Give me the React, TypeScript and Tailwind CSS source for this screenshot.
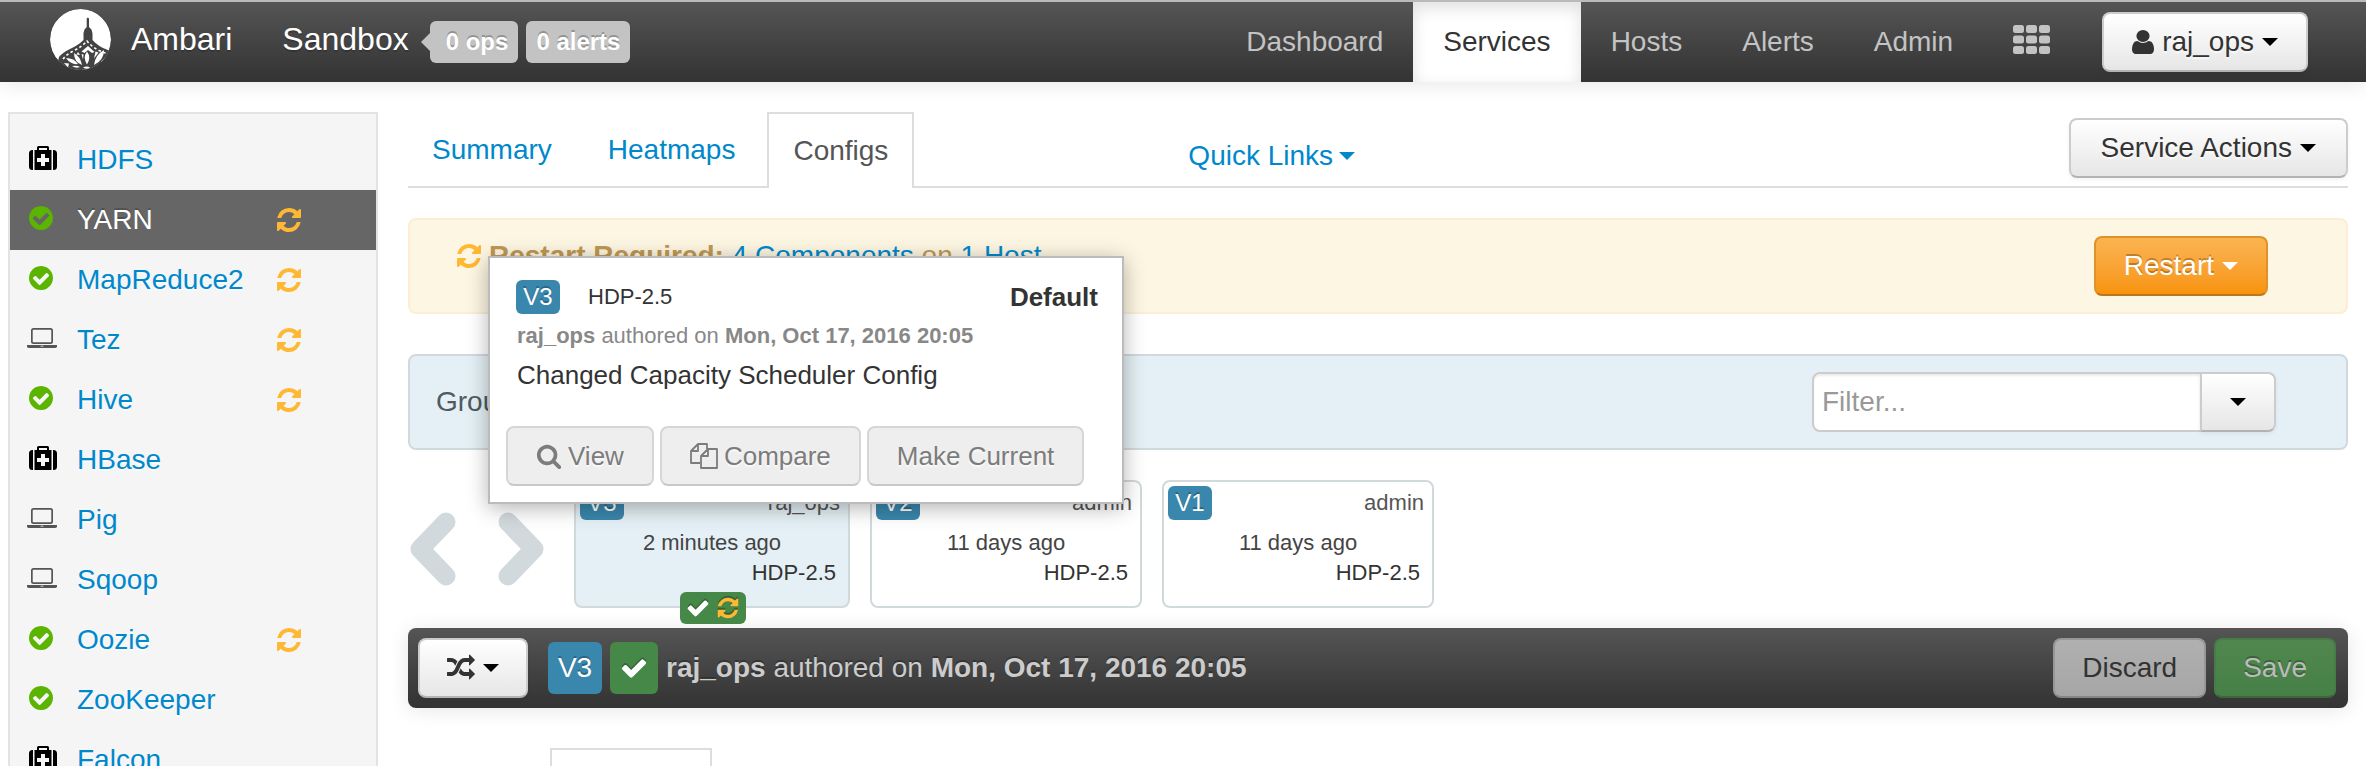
import type { ReactNode } from "react";

const PATHS = {
  refresh:
    "M1639 1056q0 5-1 7-64 268-268 434.5t-478 166.5q-146 0-282.5-55t-243.5-157l-129 129q-19 19-45 19t-45-19-19-45v-448q0-26 19-45t45-19h448q26 0 45 19t19 45-19 45l-137 137q71 66 161 102t187 36q134 0 250-65t186-179q11-17 53-117 8-23 30-23h192q13 0 22.5 9.5t9.5 22.5zm25-800v448q0 26-19 45t-45 19h-448q-26 0-45-19t-19-45 19-45l138-138q-148-137-349-137-134 0-250 65t-186 179q-11 17-53 117-8 23-30 23h-199q-13 0-22.5-9.5t-9.5-22.5v-7q65-268 270-434.5t480-166.5q146 0 284 55.5t245 156.5l130-129q19-19 45-19t45 19 19 45z",
  ok: "M1412 734q0-28-18-46l-91-90q-19-19-45-19t-45 19l-408 407-226-226q-19-19-45-19t-45 19l-91 90q-18 18-18 46 0 27 18 45l362 362q19 19 45 19 27 0 46-19l543-543q18-18 18-45zm252 162q0 209-103 385.5t-279.5 279.5-385.5 103-385.5-103-279.5-279.5-103-385.5 103-385.5 279.5-279.5 385.5-103 385.5 103 279.5 279.5 103 385.5z",
  check:
    "M1671 566q0 40-28 68l-724 724-136 136q-28 28-68 28t-68-28l-136-136-362-362q-28-28-28-68t28-68l136-136q28-28 68-28t68 28l294 295 656-657q28-28 68-28t68 28l136 136q28 28 28 68z",
  search:
    "M1216 832q0-185-131.5-316.5t-316.5-131.5-316.5 131.5-131.5 316.5 131.5 316.5 316.5 131.5 316.5-131.5 131.5-316.5zm512 832q0 52-38 90t-90 38q-54 0-90-38l-343-342q-179 124-399 124-143 0-273.5-55.5t-225-150-150-225-55.5-273.5 55.5-273.5 150-225 225-150 273.5-55.5 273.5 55.5 225 150 150 225 55.5 273.5q0 220-124 399l343 343q37 37 37 90z",
  random:
    "M666 481q-60 92-137 273-22-45-37-72.5t-40.5-63.5-51-56.5-63-35-81.5-14.5h-224q-14 0-23-9t-9-23v-192q0-14 9-23t23-9h224q250 0 410 225zm1126 799q0 14-9 23l-320 320q-9 9-23 9-13 0-22.5-9.5t-9.5-22.5v-192q-32 0-85 .5t-81 1-73-1-71-5-64-10.5-63-18.5-58-28.5-59-40-55-53.5-56-69.5q59-93 136-273 22 45 37 72.5t40.5 63.5 51 56.5 63 35 81.5 14.5h256v-192q0-14 9-23t23-9q12 0 24 10l319 319q9 9 9 23zm0-896q0 14-9 23l-320 320q-9 9-23 9-13 0-22.5-9.5t-9.5-22.5v-192h-256q-48 0-87 15t-69 45-51 61.5-45 77.5q-32 62-78 171-29 66-49.5 111t-54 105-64 100-74 83-90 68.5-106.5 42-128 16.5h-224q-14 0-23-9t-9-23v-192q0-14 9-23t23-9h224q48 0 87-15t69-45 51-61.5 45-77.5q32-62 78-171 29-66 49.5-111t54-105 64-100 74-83 90-68.5 106.5-42 128-16.5h256v-192q0-14 9-23t23-9q12 0 24 10l319 319q9 9 9 23z",
  user: "M1536 1399q0 109-62.5 187t-150.5 78h-854q-88 0-150.5-78t-62.5-187q0-85 8.5-160.5t31.5-152 58.5-131 94-89 134.5-34.5q131 128 313 128t313-128q76 0 134.5 34.5t94 89 58.5 131 31.5 152 8.5 160.5zm-256-887q0 159-112.5 271.5t-271.5 112.5-271.5-112.5-112.5-271.5 112.5-271.5 271.5-112.5 271.5 112.5 112.5 271.5z",
};

function Icon({ name, className = "" }: { name: keyof typeof PATHS; className?: string }) {
  return (
    <svg viewBox="0 0 1792 1792" fill="currentColor" aria-hidden="true" className={`shrink-0 ${className}`}>
      <path d={PATHS[name]} />
    </svg>
  );
}

function Caret({ className = "" }: { className?: string }) {
  return (
    <svg viewBox="0 0 16 8" fill="currentColor" aria-hidden="true" className={`h-2 w-4 shrink-0 ${className}`}>
      <path d="M0 0h16L8 8z" />
    </svg>
  );
}

function Medkit() {
  return (
    <svg viewBox="0 0 28 24" aria-hidden="true" className="h-6 w-7 text-black" fill="currentColor">
      <path d="M4 4v20H3.500A3.500 3.500 0 0 1 0 20.500v-13A3.500 3.500 0 0 1 3.500 4z" />
      <path d="M24 4v20h.5a3.500 3.500 0 0 0 3.500-3.500v-13A3.500 3.500 0 0 0 24.500 4z" />
      <path
        fillRule="evenodd"
        d="M5.500 4H8V1.500A1.500 1.500 0 0 1 9.500 0h9A1.500 1.500 0 0 1 20 1.500V4h2.500v20h-17zM10 2v2h8V2zM12 8v4H8v4h4v4h4v-4h4v-4h-4V8z"
      />
    </svg>
  );
}

function Laptop() {
  return (
    <svg viewBox="0 0 30 20" aria-hidden="true" className="-ml-0.5 h-5 w-[30px] text-[#555]" fill="currentColor">
      <path
        fillRule="evenodd"
        d="M6.500 0h17A2.500 2.500 0 0 1 26 2.500v11a2.500 2.500 0 0 1-2.500 2.500h-17A2.500 2.500 0 0 1 4 13.500v-11A2.500 2.500 0 0 1 6.500 0zM6.500 1.700a.8.8 0 0 0-.8.8v11a.8.8 0 0 0 .8.8h17a.8.8 0 0 0 .8-.8v-11a.8.8 0 0 0-.8-.8z"
      />
      <path fillRule="evenodd" d="M0 17h30v1.500q0 1.500-2.500 1.500h-25Q0 20 0 18.500zM13.500 17.800v.7h3v-.7z" />
    </svg>
  );
}

function Files() {
  return (
    <svg
      viewBox="0 0 28 28"
      aria-hidden="true"
      className="h-7 w-7 shrink-0"
      fill="none"
      stroke="currentColor"
      strokeWidth="1.800"
      strokeLinejoin="round"
    >
      <path d="M10 21H1V9l7-7h9v5M8 2v7H1" />
      <path d="M11 26V14l7-7h9v19zM18 7v7h-7" />
    </svg>
  );
}

function AppsGrid() {
  const steps = [0, 1, 2];
  return (
    <svg viewBox="0 0 37 29" aria-hidden="true" className="h-[29px] w-[37px]" fill="#c3c3c3">
      {steps.map((r) =>
        steps.map((c) => <rect key={`${r}${c}`} x={c * 13} y={r * 10.5} width="11" height="8" rx="2.500" />)
      )}
    </svg>
  );
}

function Logo() {
  return (
    <svg viewBox="0 0 61 61" aria-hidden="true" className="h-[61px] w-[61px]">
      <defs>
        <clipPath id="disc">
          <circle cx="30.500" cy="30.500" r="30.500" />
        </clipPath>
      </defs>
      <g clipPath="url(#disc)">
        <circle cx="30.500" cy="30.500" r="30.500" fill="#fff" />
        <path
          fill="#434343"
          d="M37.800 8.500l1.200 1v8.500l2.500 2.500 1 4V31q6 7 15.500 10l8 2v22H5L9 48q3-4 10-7.500 9-4 14.500-9.500v-7l1-3.500 2.200-2.500V9.500z"
        />
        <path
          fill="none"
          stroke="#fff"
          strokeWidth="1.600"
          strokeDasharray="2.600 2.400"
          d="M13 50q4-5 11-8.500 8-4 13-9.500 5 6 12 9.500l10 4"
        />
        <g fill="#fff">
          <path d="M38 37l6.500 6-2.500 1-4-3-3.500 3-3-1.500z" />
          <path d="M28 43l2 3-3.500-.5z" />
          <path d="M24 44q6 3 8 12-8-3-8-12z" />
          <path d="M38 42.500q4.500 6 0 13-4.500-7 0-13z" transform="translate(-1 0)" />
          <path d="M54 41q0 10-10 15 1-10 10-15z" />
          <path d="M45.500 42.500l3 1-4.500 6z" />
          <path d="M16 49q8 0 12 6-7 1-12-6z" />
          <path d="M14 54l5 .5-1 4zM22 57q5-1 8 1-4 2-8-1zM33 58.500q4-2 7 0-3 2.500-7 0z" />
          <path d="M31.500 45l2 .5-.5 5zM56 48l-3 6-2-1.500z" />
        </g>
      </g>
    </svg>
  );
}

const BTN = "flex h-[60px] shrink-0 items-center rounded-lg border-2";
const BTN_LIGHT =
  "border-[#ccc] border-b-[#b3b3b3] bg-linear-to-b from-white to-[#e6e6e6] text-[#333] [text-shadow:0_2px_2px_rgba(255,255,255,0.75)] shadow-[0_2px_4px_rgba(0,0,0,0.05)]";
const BTN_OFF =
  "gap-1.5 border-[#d6d6d6] border-b-[#c8c8c8] bg-[#eee] px-7 text-[26px] text-[#7c7c7c] [text-shadow:0_2px_2px_rgba(255,255,255,0.75)]";
const LABEL =
  "rounded-md bg-[#3a87ad] text-center text-white [text-shadow:0_-2px_0_rgba(0,0,0,0.25)]";

function NavLink({ children, active = false }: { children: ReactNode; active?: boolean }) {
  return (
    <a
      href="#"
      aria-current={active ? "page" : undefined}
      className={`flex items-center px-[30px] ${
        active ? "bg-white text-[#333] shadow-[inset_0_6px_16px_rgba(0,0,0,0.125)]" : "text-[#c3c3c3]"
      }`}
    >
      {children}
    </a>
  );
}

function Header() {
  return (
    <header className="flex h-[82px] border-t-2 border-[#b7bbbb] bg-linear-to-b from-[#555] to-[#333] pr-[58px] pl-[50px] shadow-[0_2px_20px_rgba(0,0,0,0.1)]">
      <div className="flex items-center pb-1.5 text-[32px] text-white [text-shadow:0_2px_0_rgba(0,0,0,0.2)]">
        <Logo />
        <a href="#" className="ml-5">
          Ambari
        </a>
        <a href="#" className="ml-[50px]">
          Sandbox
        </a>
      </div>
      <div className="ml-3 flex items-center gap-2 text-2xl leading-[42px] font-bold text-white [text-shadow:0_-2px_0_rgba(0,0,0,0.25)]">
        <a href="#" className="flex items-center">
          <svg viewBox="0 0 9 18" aria-hidden="true" className="h-[18px] w-[9px]" fill="#c3c3c3">
            <path d="M9 0v18L0 9z" />
          </svg>
          <span className="rounded-md bg-[#c3c3c3] pr-2.5 pl-4">0 ops</span>
        </a>
        <a href="#" className="rounded-md bg-[#c3c3c3] px-2.5">
          0 alerts
        </a>
      </div>
      <nav className="ml-auto flex">
        <NavLink>Dashboard</NavLink>
        <NavLink active>Services</NavLink>
        <NavLink>Hosts</NavLink>
        <NavLink>Alerts</NavLink>
        <NavLink>Admin</NavLink>
        <a href="#" aria-label="Views" className="flex items-center px-[30px] pb-1.5">
          <AppsGrid />
        </a>
      </nav>
      <button type="button" className={`${BTN} ${BTN_LIGHT} ml-[22px] self-center px-7`}>
        <svg viewBox="256 128 1280 1536" fill="currentColor" aria-hidden="true" className="mr-2 h-6 w-[22px]" preserveAspectRatio="none">
          <path d={PATHS.user} />
        </svg>
        raj_ops
        <Caret className="ml-2 text-black" />
      </button>
    </header>
  );
}

type Service = { name: string; state: "maint" | "ok" | "client"; restart?: boolean; active?: boolean };

const SERVICES: Service[] = [
  { name: "HDFS", state: "maint" },
  { name: "YARN", state: "ok", restart: true, active: true },
  { name: "MapReduce2", state: "ok", restart: true },
  { name: "Tez", state: "client", restart: true },
  { name: "Hive", state: "ok", restart: true },
  { name: "HBase", state: "maint" },
  { name: "Pig", state: "client" },
  { name: "Sqoop", state: "client" },
  { name: "Oozie", state: "ok", restart: true },
  { name: "ZooKeeper", state: "ok" },
  { name: "Falcon", state: "maint" },
];

function Sidebar() {
  return (
    <aside className="w-[370px] shrink-0 border-2 border-[#e3e3e3] bg-[#f5f5f5] py-4">
      <ul>
        {SERVICES.map((s) => (
          <li key={s.name}>
            <a
              href="#"
              className={`grid h-[60px] grid-cols-[48px_198px_auto] items-center pl-[19px] ${
                s.active
                  ? "bg-[#666] text-white [text-shadow:0_-2px_0_rgba(0,0,0,0.2)]"
                  : "text-[#08c] [text-shadow:0_2px_0_rgba(255,255,255,0.5)]"
              }`}
            >
              <span className="pb-1">
                {s.state === "maint" && <Medkit />}
                {s.state === "client" && <Laptop />}
                {s.state === "ok" && <Icon name="ok" className="-ml-0.5 h-7 w-7 text-[#5ab400]" />}
              </span>
              <span>{s.name}</span>
              {s.restart && <Icon name="refresh" className="h-7 w-7 text-[#ffb833]" />}
            </a>
          </li>
        ))}
      </ul>
    </aside>
  );
}

function Tabs() {
  return (
    <div className="flex h-[76px] border-b-2 border-[#ddd]">
      <nav className="-mb-0.5 flex gap-2 text-[#08c]">
        <a href="#" className="flex items-center px-6">
          Summary
        </a>
        <a href="#" className="flex items-center px-6">
          Heatmaps
        </a>
        <a href="#" className="flex items-center border-2 border-b-0 border-[#ddd] bg-white px-6 text-[#555]">
          Configs
        </a>
      </nav>
      <a href="#" className="ml-[274px] flex items-center gap-1.5 pt-3.5 text-[#08c]">
        Quick Links
        <Caret />
      </a>
      <button type="button" className={`${BTN} ${BTN_LIGHT} mt-1.5 ml-auto gap-2 px-[30px]`}>
        Service Actions
        <Caret className="text-black" />
      </button>
    </div>
  );
}

function RestartAlert() {
  return (
    <section className="mt-[30px] flex h-24 items-center rounded-lg border-2 border-[#fbeed5] bg-[#fdf6e2] pr-[78px] pl-[45px]">
      <p className="flex items-center pb-5 text-[#c09853]">
        <Icon name="refresh" className="mr-1.5 h-7 w-7 text-[#ffb833]" />
        <span>
          <strong>Restart Required:</strong>{" "}
          <a href="#" className="text-[#08c]">
            4 Components
          </a>{" "}
          on{" "}
          <a href="#" className="text-[#08c]">
            1 Host
          </a>
        </span>
      </p>
      <button
        type="button"
        className={`${BTN} ml-auto gap-2 border-[#e0922a] border-b-[#bb7620] bg-linear-to-b from-[#fbb450] to-[#f89406] px-7 text-white [text-shadow:0_-2px_0_rgba(0,0,0,0.25)]`}
      >
        Restart
        <Caret />
      </button>
    </section>
  );
}

function FilterBar() {
  return (
    <section className="mt-10 flex h-24 items-center rounded-lg border-2 border-[#d2d9dd] bg-[#e4f0f5] pr-[70px] pl-[26px]">
      <span className="text-[#4f5a5f]">Group</span>
      <div className="ml-auto flex">
        <input
          type="text"
          aria-label="Filter"
          placeholder="Filter..."
          className="h-[60px] w-[390px] rounded-l-lg border-2 border-[#ccc] bg-white px-2 shadow-[inset_0_2px_2px_rgba(0,0,0,0.075)] placeholder:text-[#999]"
        />
        <button
          type="button"
          aria-label="Filter options"
          className={`${BTN} ${BTN_LIGHT} -ml-0.5 w-[76px] justify-center rounded-l-none`}
        >
          <Caret className="text-black" />
        </button>
      </div>
    </section>
  );
}

const VERSIONS = [
  { id: "V3", author: "raj_ops", age: "2 minutes ago", current: true },
  { id: "V2", author: "admin", age: "11 days ago", current: false },
  { id: "V1", author: "admin", age: "11 days ago", current: false },
];

function Chevron({ d, label }: { d: string; label: string }) {
  return (
    <button type="button" aria-label={label} className="mt-2.5">
      <svg viewBox="0 0 48 76" className="h-[76px] w-12" fill="none" stroke="#d2d9dd" strokeWidth="19" strokeLinecap="round" strokeLinejoin="round">
        <path d={d} />
      </svg>
    </button>
  );
}

function Versions() {
  return (
    <section className="mt-[30px] flex items-center text-[22px] leading-[30px]">
      <Chevron label="Newer versions" d="M38 11L12 38l26 27" />
      <span className="w-[42px]" />
      <Chevron label="Older versions" d="M10 11l26 27-26 27" />
      <div className="ml-7 flex gap-5">
        {VERSIONS.map((v) => (
          <article
            key={v.id}
            className={`relative h-32 rounded-lg border-2 border-[#d2d9dd] p-1 text-[#444] ${
              v.current ? "w-[276px] bg-[#e4f0f5]" : "w-[272px] bg-white"
            }`}
          >
            <div className="flex items-center justify-between pr-1">
              <span className={`${LABEL} w-11 text-2xl leading-[34px]`}>{v.id}</span>
              <span className="text-[#555]">{v.author}</span>
            </div>
            <p className="mt-2 text-center">{v.age}</p>
            <p className="pr-2 text-right text-[#333]">HDP-2.5</p>
            {v.current && (
              <span className="absolute -bottom-[18px] left-[104px] flex h-8 w-[66px] items-center justify-center gap-1.5 rounded-md bg-[#468847] text-white">
                <Icon name="check" className="h-6 w-6 drop-shadow-[0_-2px_0_rgba(0,0,0,0.25)]" />
                <Icon name="refresh" className="h-6 w-6 text-[#ffb833] drop-shadow-[0_-2px_0_rgba(0,0,0,0.25)]" />
              </span>
            )}
          </article>
        ))}
      </div>
    </section>
  );
}

function VersionBar() {
  return (
    <section className="mt-5 flex h-20 items-center rounded-lg bg-linear-to-b from-[#555] to-[#333] pr-3 pl-2.5 text-[#ccc] shadow-[0_2px_20px_rgba(0,0,0,0.1)]">
      <button type="button" aria-label="Switch version" className={`${BTN} ${BTN_LIGHT} w-[110px] justify-center gap-2`}>
        <Icon name="random" className="h-7 w-7" />
        <Caret className="text-black" />
      </button>
      <span className={`${LABEL} ml-5 w-[54px] leading-[52px]`}>V3</span>
      <span className="ml-2 flex h-[52px] w-12 items-center justify-center rounded-md bg-[#468847] text-white">
        <Icon name="check" className="h-7 w-7 drop-shadow-[0_-2px_0_rgba(0,0,0,0.25)]" />
      </span>
      <p className="ml-2 [text-shadow:0_-2px_0_rgba(0,0,0,0.25)]">
        <strong>raj_ops</strong> authored on <strong>Mon, Oct 17, 2016 20:05</strong>
      </p>
      <button
        type="button"
        disabled
        className={`${BTN} ml-auto border-[#979797] border-b-[#868686] bg-linear-to-b from-[#b0b0b0] to-[#a6a6a6] px-[27px] text-[#333]`}
      >
        Discard
      </button>
      <button
        type="button"
        disabled
        className={`${BTN} ml-2 border-[#467c46] border-b-[#3a683a] bg-linear-to-b from-[#51874f] to-[#468047] px-[27px] text-[#bbb] [text-shadow:0_-2px_0_rgba(0,0,0,0.25)]`}
      >
        Save
      </button>
    </section>
  );
}

function VersionPopover() {
  return (
    <div
      role="dialog"
      aria-label="Version V3"
      className="absolute top-36 left-20 w-[636px] border-2 border-[#bbb] bg-white pt-[22px] pb-4 text-[#333] shadow-[0_4px_20px_rgba(0,0,0,0.3)]"
    >
      <div className="flex items-center pr-6 pl-[26px]">
        <span className={`${LABEL} w-11 text-2xl leading-[34px]`}>V3</span>
        <span className="ml-7 text-[22px] leading-[34px]">HDP-2.5</span>
        <strong className="ml-auto text-[26px] leading-[34px]">Default</strong>
      </div>
      <p className="mt-0.5 pl-[27px] text-[22px] text-[#888]">
        <strong>raj_ops</strong> authored on <strong>Mon, Oct 17, 2016 20:05</strong>
      </p>
      <p className="pl-[27px] text-[26px] leading-[38px]">Changed Capacity Scheduler Config</p>
      <div className="mt-8 flex gap-1.5 pl-4">
        <button type="button" className={`${BTN} ${BTN_OFF}`}>
          <Icon name="search" className="h-[26px] w-[26px]" />
          View
        </button>
        <button type="button" className={`${BTN} ${BTN_OFF}`}>
          <Files />
          Compare
        </button>
        <button type="button" className={`${BTN} ${BTN_OFF}`}>
          Make Current
        </button>
      </div>
    </div>
  );
}

export default function App() {
  return (
    <div className="h-screen overflow-hidden bg-white font-['Liberation_Sans',Arial,sans-serif] text-[28px] leading-10">
      <Header />
      <div className="flex items-start gap-[30px] pt-[30px] pr-[18px] pl-2">
        <Sidebar />
        <main className="relative min-w-0 flex-1">
          <Tabs />
          <RestartAlert />
          <FilterBar />
          <Versions />
          <VersionBar />
          <div className="mt-10 ml-[142px] h-20 w-[162px] border-2 border-b-0 border-[#ddd]" />
          <VersionPopover />
        </main>
      </div>
    </div>
  );
}
